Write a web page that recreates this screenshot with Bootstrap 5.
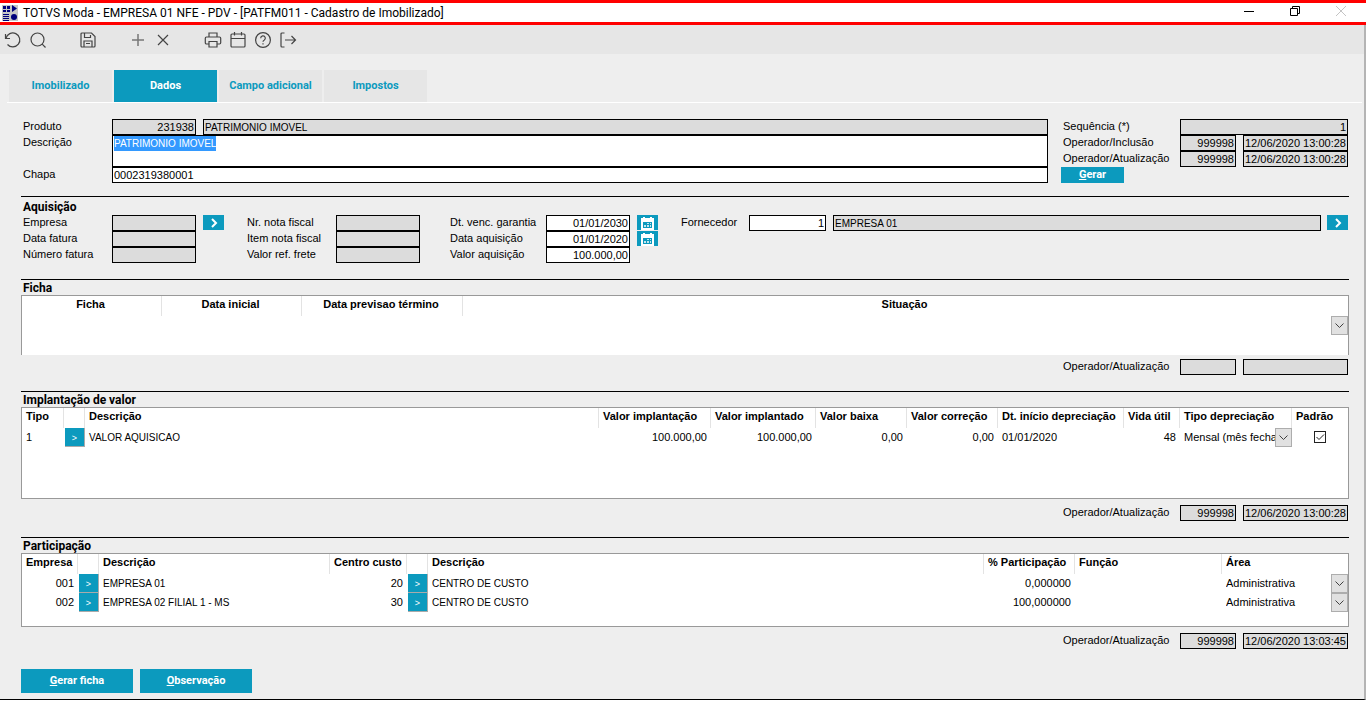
<!DOCTYPE html>
<html lang="pt-BR">
<head>
<meta charset="utf-8">
<meta name="viewport" content="width=device-width, initial-scale=1">
<title>TOTVS Moda - Cadastro de Imobilizado</title>
<link href="https://cdn.jsdelivr.net/npm/bootstrap@5.3.0/dist/css/bootstrap.min.css" rel="stylesheet">
<style>
:root{--accent:#0c9abe;--face:#eee;--locked:#dcdcdc}
body{font-family:"Liberation Sans",Arial,sans-serif;font-size:11px;line-height:16px;color:#000;background:#fff}
button,input,select,textarea{font:inherit;color:inherit;border-radius:0}
.titlebar{height:25px;background:#fff;border:solid #f00;border-width:3px 0;padding:0 17px 0 2px}
.titlebar h1{font:12px/18px Roboto,"Segoe UI",sans-serif;padding-left:5px}
.winbtn{border:0;background:none;padding:0;width:16px;height:16px;display:flex;align-items:center;justify-content:center}
.winbtns{gap:30px;margin-bottom:4px}
.shell{background:var(--face);border-right:2px solid #b4b4b4;border-bottom:1px solid #000}
.toolbar{height:29px;background:#e6e6e6}
.tool{width:25px;height:29px;padding:0;border:0;background:none;display:flex;align-items:center;justify-content:center;color:#444}
.tool-end{margin-right:25px}
.tool svg{width:18px;height:18px;fill:none;stroke:currentColor;stroke-width:1.2}
.tabs{gap:2px;padding:0 2px;margin:16px 2px 0 7px;border-bottom:1px solid #fff}
.tabs .tab-btn{width:103px;height:32px;padding:0;border:0;background:#e6e6e6;color:var(--accent);font:bold 11px/32px Roboto,sans-serif}
.tabs .tab-btn.active{background:var(--accent);color:#fff}
.content{padding:16px 15px 6px 21px}
.fld{display:block;width:100%;min-width:0;height:16px;border:1px solid #000;padding:0 1px;background:#fff;outline:0}
.fld[readonly]{background:var(--locked)}
textarea.fld{height:32px;line-height:15px;resize:none;overflow:hidden}
textarea.fld::selection{background:#39f;color:#fff}
.caps{font-size:10px}
input.caps{padding-top:1px}
.wide{grid-column:2 / -1}
.grid-form{display:grid;grid-auto-rows:16px}
.grid-form label,.oper label{padding-left:2px;line-height:15px;white-space:nowrap}
.g-prod{grid-template-columns:91px 84px 1fr;grid-template-rows:16px 32px 16px}
.prod-name{padding-left:7px}
.g-seq,.oper{grid-template-columns:119px 56px 7px 105px;width:288px;padding-right:1px}
.g-seq{margin-left:13px}
.g-a{grid-template-columns:91px 84px 7px 21px}
.g-b{grid-template-columns:91px 84px;margin-left:21px}
.g-c{grid-template-columns:98px 84px 7px 21px;margin-left:28px}
.g-d{grid-template-columns:70px 77px 7px 1fr 6px 21px;padding-right:1px;margin-left:21px}
.accent-btn{background:var(--accent);color:#fff;border:0;padding:0;font:bold 11px/16px Roboto,sans-serif}
.gerar{width:63px}
.sq{display:flex;align-items:center;justify-content:center;height:15px}
.block{border-top:1px solid #000;padding-bottom:16px}
.block h2{font:bold 12px/16px Roboto,sans-serif;height:15px;margin:0;padding-left:2px}
.block.after-form{margin-top:13px}
.block.after-form h2{height:18px;line-height:20px}
.frame{background:#fff;border:1px solid #999}
.frame-a{height:60px;border-bottom:0}
.frame-b{height:92px}
.frame-c{height:74px}
.frame table{width:100%;table-layout:fixed;border-collapse:separate;border-spacing:0}
.frame th{height:20px;padding:0 0 4px 4px;font-weight:bold;border-right:1px solid #e3e3e3;white-space:nowrap;line-height:16px}
.frame .text-center th{padding:0 4px 4px 2px}
.frame th:last-child{border-right:0}
.frame td{height:19px;padding:0 4px;white-space:nowrap;line-height:19px;overflow:hidden}
.frame td.ctl{padding:0 0 0 1px}
.look{display:block;width:20px;height:19px;border:solid #aaa;border-width:0 1px 1px 0;background:var(--accent);color:#fff;padding:2px 0 0;font-size:9px;line-height:16px}
.c-1{width:140px}.c-2{width:161px}
.drop{display:block;width:100%;height:19px;appearance:none;border:0;padding:0 17px 0 4px;background:transparent url("data:image/svg+xml,%3Csvg xmlns='http://www.w3.org/2000/svg' width='17' height='19'%3E%3Crect x='.5' y='.5' width='16' height='18' fill='%23e1e1e1' stroke='%23adadad'/%3E%3Cpath d='M4.500 7.500l4 4 4-4' fill='none' stroke='%23404040'/%3E%3C/svg%3E") no-repeat right top;outline:0}
.chk{appearance:none;display:block;width:12px;height:12px;margin:0 auto 2px;border:1px solid #222;background:#fff url("data:image/svg+xml,%3Csvg xmlns='http://www.w3.org/2000/svg' width='10' height='10'%3E%3Cpath d='M1.500 5l2.500 2.500 5-5' fill='none' stroke='%23222'/%3E%3C/svg%3E")}
.oper{display:grid;margin-left:auto}
.oper-gap{margin-top:6px}
.foot{gap:7px;margin-top:4px}
.foot-btn{width:112px;height:24px}
</style>
</head>
<body>
<header class="titlebar d-flex align-items-center">
  <svg width="16" height="16" viewBox="0 0 16 16" aria-hidden="true"><path fill="#c6c6c6" d="M0 0h16v16H0z"/><path fill="#00007c" d="M1 1h3v3H1zM5 1h3v3H5zM1 5h3v2H1zM5 5h3v2H5zM10 0l5 3.500-5 3.500zM1 9h6v1H1zM1 11h6v1H1zM1 13h6v1H1zM1 15h6v1H1z"/><circle cx="12" cy="12" r="3" fill="#00007c"/></svg>
  <h1 class="m-0 me-auto text-nowrap">TOTVS Moda - EMPRESA 01 NFE - PDV - [PATFM011 - Cadastro de Imobilizado]</h1>
  <div class="winbtns d-flex">
    <button class="winbtn" aria-label="Minimizar"><svg width="10" height="10"><path d="M0 5.500h10" stroke="#000"/></svg></button>
    <button class="winbtn" aria-label="Restaurar"><svg width="10" height="10" fill="none" stroke="#000"><path d="M.5 2.500h7v7h-7zM2.500 2.500v-2h7v7h-2"/></svg></button>
    <button class="winbtn" aria-label="Fechar"><svg width="10" height="10"><path d="M0 0l10 10M10 0L0 10" stroke="#c4c4c4"/></svg></button>
  </div>
</header>

<main class="shell">
  <div class="toolbar d-flex" role="toolbar" aria-label="Ações">
    <button class="tool" aria-label="Desfazer"><svg viewBox="0 0 18 18"><path d="M1.500 3v4.500H6M2 7.300A7 7 0 1 1 3.500 13.500"/></svg></button>
    <button class="tool tool-end" aria-label="Pesquisar"><svg viewBox="0 0 18 18"><circle cx="8.500" cy="8.500" r="6.500"/><path d="M13.200 13.200l3.300 3.300"/></svg></button>
    <button class="tool tool-end" aria-label="Salvar"><svg viewBox="0 0 18 18"><path d="M3 2h9.500L16 5.500V15a1 1 0 0 1-1 1H3a1 1 0 0 1-1-1V3a1 1 0 0 1 1-1zM5.500 2v4.500h6V4M5 16v-6h8v6M7 12.500h4"/></svg></button>
    <button class="tool" aria-label="Incluir"><svg viewBox="0 0 18 18"><path stroke="#777" stroke-width="1.500" d="M9 3v12M3 9h12"/></svg></button>
    <button class="tool tool-end" aria-label="Excluir"><svg viewBox="0 0 18 18"><path d="M4 4l10 10M14 4L4 14"/></svg></button>
    <button class="tool" aria-label="Imprimir"><svg viewBox="0 0 18 18"><path d="M5 6V2h8v4M5 13H2.500A1.200 1.200 0 0 1 1.300 11.800V7.200A1.200 1.200 0 0 1 2.500 6h13a1.200 1.200 0 0 1 1.200 1.200v4.600a1.200 1.200 0 0 1-1.200 1.200H13M5 10.500h8V16H5z"/></svg></button>
    <button class="tool" aria-label="Calendário"><svg viewBox="0 0 18 18"><path d="M3 3h12a1 1 0 0 1 1 1v11a1 1 0 0 1-1 1H3a1 1 0 0 1-1-1V4a1 1 0 0 1 1-1zM2 7.500h14M5.500 1v3.500M12.500 1v3.500"/></svg></button>
    <button class="tool" aria-label="Ajuda"><svg viewBox="0 0 18 18"><circle cx="9" cy="9" r="7.400"/><path d="M6.700 7.200a2.300 2.300 0 1 1 3.400 2c-.8.400-1.100.8-1.100 1.600M9 12.200v1.300"/></svg></button>
    <button class="tool" aria-label="Sair"><svg viewBox="0 0 18 18"><path d="M5.500 2H3a1 1 0 0 0-1 1v12a1 1 0 0 0 1 1h2.500M6 9h10.500M12.500 5l4 4-4 4"/></svg></button>
  </div>

  <nav class="tabs d-flex" role="tablist">
    <button class="tab-btn" role="tab">Imobilizado</button>
    <button class="tab-btn active" role="tab" aria-selected="true">Dados</button>
    <button class="tab-btn" role="tab">Campo adicional</button>
    <button class="tab-btn" role="tab">Impostos</button>
  </nav>

  <form class="content">
    <div class="d-flex">
      <div class="grid-form g-prod flex-grow-1">
        <label for="prod">Produto</label>
        <input id="prod" class="fld text-end" readonly value="231938">
        <div class="prod-name"><input class="fld caps" aria-label="Nome do produto" readonly value="PATRIMONIO IMOVEL"></div>
        <label for="desc">Descrição</label>
        <textarea id="desc" class="fld caps wide">PATRIMONIO IMOVEL</textarea>
        <label for="chapa">Chapa</label>
        <input id="chapa" class="fld wide" value="0002319380001">
      </div>
      <div class="grid-form g-seq">
        <label for="seq">Sequência (*)</label>
        <input id="seq" class="fld text-end wide" readonly value="1">
        <label for="inc">Operador/Inclusão</label>
        <input id="inc" class="fld text-end" readonly value="999998"><span></span>
        <input class="fld" aria-label="Data de inclusão" readonly value="12/06/2020 13:00:28">
        <label for="atu">Operador/Atualização</label>
        <input id="atu" class="fld text-end" readonly value="999998"><span></span>
        <input class="fld" aria-label="Data de atualização" readonly value="12/06/2020 13:00:28">
        <button type="button" class="accent-btn gerar"><u>G</u>erar</button>
      </div>
    </div>

    <section class="block after-form">
      <h2>Aquisição</h2>
      <div class="d-flex">
        <div class="grid-form g-a">
          <label for="emp">Empresa</label><input id="emp" class="fld" readonly><span></span>
          <button type="button" class="accent-btn sq" aria-label="Abrir empresa"><svg width="8" height="10"><path d="M2 1l4 4-4 4" fill="none" stroke="#fff" stroke-width="2"/></svg></button>
          <label for="dfat">Data fatura</label><input id="dfat" class="fld" readonly><span></span><span></span>
          <label for="nfat">Número fatura</label><input id="nfat" class="fld" readonly>
        </div>
        <div class="grid-form g-b">
          <label for="nnf">Nr. nota fiscal</label><input id="nnf" class="fld" readonly>
          <label for="inf">Item nota fiscal</label><input id="inf" class="fld" readonly>
          <label for="vrf">Valor ref. frete</label><input id="vrf" class="fld" readonly>
        </div>
        <div class="grid-form g-c">
          <label for="dvg">Dt. venc. garantia</label><input id="dvg" class="fld text-end" value="01/01/2030"><span></span>
          <button type="button" class="accent-btn sq" aria-label="Escolher data da garantia"><svg width="15" height="14"><path fill="#fff" d="M1 2h2V1h2v1h5V1h2v1h2v12H1z"/><path fill="#0c9abe" d="M3 6h9v6H3z"/><path fill="#fff" fill-opacity=".75" d="M7 7h2v1H7zM10 7h1v1h-1zM4 9h2v2H4zM7 9h2v2H7zM10 9h1v2h-1z"/></svg></button>
          <label for="daq">Data aquisição</label><input id="daq" class="fld text-end" value="01/01/2020"><span></span>
          <button type="button" class="accent-btn sq" aria-label="Escolher data da aquisição"><svg width="15" height="14"><path fill="#fff" d="M1 2h2V1h2v1h5V1h2v1h2v12H1z"/><path fill="#0c9abe" d="M3 6h9v6H3z"/><path fill="#fff" fill-opacity=".75" d="M7 7h2v1H7zM10 7h1v1h-1zM4 9h2v2H4zM7 9h2v2H7zM10 9h1v2h-1z"/></svg></button>
          <label for="vaq">Valor aquisição</label><input id="vaq" class="fld text-end" value="100.000,00">
        </div>
        <div class="grid-form g-d flex-grow-1">
          <label for="forn">Fornecedor</label><input id="forn" class="fld text-end" value="1"><span></span>
          <input class="fld caps" aria-label="Nome do fornecedor" readonly value="EMPRESA 01"><span></span>
          <button type="button" class="accent-btn sq" aria-label="Abrir fornecedor"><svg width="8" height="10"><path d="M2 1l4 4-4 4" fill="none" stroke="#fff" stroke-width="2"/></svg></button>
        </div>
      </div>
    </section>

    <section class="block">
      <h2>Ficha</h2>
      <div class="frame frame-a">
        <table>
          <colgroup><col class="c-1"><col class="c-1"><col class="c-2"><col></colgroup>
          <thead><tr class="text-center"><th>Ficha</th><th>Data inicial</th><th>Data previsao término</th><th>Situação</th></tr></thead>
          <tbody><tr><td></td><td></td><td></td><td class="ctl"><select class="drop" aria-label="Situação"><option></option></select></td></tr></tbody>
        </table>
      </div>
      <div class="oper mt-1"><label for="op1">Operador/Atualização</label><input id="op1" class="fld" readonly><span></span><input class="fld" aria-label="Data" readonly></div>
    </section>

    <section class="block">
      <h2>Implantação de valor</h2>
      <div class="frame frame-b">
        <table>
          <colgroup><col style="width:42px"><col style="width:21px"><col><col style="width:112px"><col style="width:105px"><col style="width:91px"><col style="width:91px"><col style="width:126px"><col style="width:56px"><col style="width:112px"><col style="width:56px"></colgroup>
          <thead><tr><th>Tipo</th><th></th><th>Descrição</th><th>Valor implantação</th><th>Valor implantado</th><th>Valor baixa</th><th>Valor correção</th><th>Dt. início depreciação</th><th>Vida útil</th><th>Tipo depreciação</th><th>Padrão</th></tr></thead>
          <tbody><tr><td>1</td><td class="ctl"><button type="button" class="look">&gt;</button></td><td class="caps">VALOR AQUISICAO</td><td class="text-end">100.000,00</td><td class="text-end">100.000,00</td><td class="text-end">0,00</td><td class="text-end">0,00</td><td>01/01/2020</td><td class="text-end">48</td><td class="p-0"><select class="drop" aria-label="Tipo depreciação"><option>Mensal (mês fechado)</option></select></td><td><input type="checkbox" class="chk" checked aria-label="Padrão"></td></tr></tbody>
        </table>
      </div>
      <div class="oper oper-gap"><label for="op2">Operador/Atualização</label><input id="op2" class="fld text-end" readonly value="999998"><span></span><input class="fld" aria-label="Data" readonly value="12/06/2020 13:00:28"></div>
    </section>

    <section class="block">
      <h2>Participação</h2>
      <div class="frame frame-c">
        <table>
          <colgroup><col style="width:56px"><col style="width:21px"><col style="width:231px"><col style="width:77px"><col style="width:21px"><col><col style="width:91px"><col style="width:147px"><col style="width:126px"></colgroup>
          <thead><tr><th>Empresa</th><th></th><th>Descrição</th><th>Centro custo</th><th></th><th>Descrição</th><th>% Participação</th><th>Função</th><th>Área</th></tr></thead>
          <tbody>
            <tr><td class="text-end">001</td><td class="ctl"><button type="button" class="look">&gt;</button></td><td class="caps">EMPRESA 01</td><td class="text-end">20</td><td class="ctl"><button type="button" class="look">&gt;</button></td><td class="caps">CENTRO DE CUSTO</td><td class="text-end">0,000000</td><td></td><td class="p-0"><select class="drop" aria-label="Área"><option>Administrativa</option></select></td></tr>
            <tr><td class="text-end">002</td><td class="ctl"><button type="button" class="look">&gt;</button></td><td class="caps">EMPRESA 02 FILIAL 1 - MS</td><td class="text-end">30</td><td class="ctl"><button type="button" class="look">&gt;</button></td><td class="caps">CENTRO DE CUSTO</td><td class="text-end">100,000000</td><td></td><td class="p-0"><select class="drop" aria-label="Área"><option>Administrativa</option></select></td></tr>
          </tbody>
        </table>
      </div>
      <div class="oper oper-gap"><label for="op3">Operador/Atualização</label><input id="op3" class="fld text-end" readonly value="999998"><span></span><input class="fld" aria-label="Data" readonly value="12/06/2020 13:03:45"></div>
    </section>

    <div class="foot d-flex">
      <button type="button" class="accent-btn foot-btn"><u>G</u>erar ficha</button>
      <button type="button" class="accent-btn foot-btn"><u>O</u>bservação</button>
    </div>
  </form>
</main>
<script src="https://cdn.jsdelivr.net/npm/bootstrap@5.3.0/dist/js/bootstrap.bundle.min.js"></script>
<script>
const desc = document.getElementById('desc');
desc.focus();
desc.select();
</script>
</body>
</html>
